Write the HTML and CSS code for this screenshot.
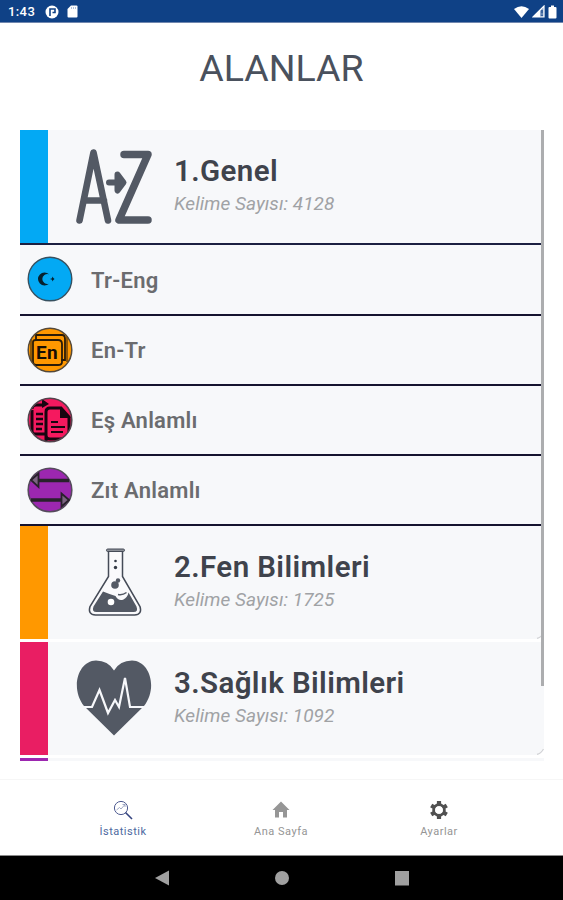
FILE: index.html
```html
<!DOCTYPE html>
<html lang="tr">
  <head>
    <meta charset="UTF-8" />
    <meta name="viewport" content="width=device-width, initial-scale=1.0" />
    <title>Alanlar</title>
    <link rel="stylesheet" href="styles.css">
  </head>
  <body>
    <div class="status-bar">
      <span class="time">1:43</span>
      <svg class="status-app" width="14" height="14" viewBox="0 0 14 14">
        <circle cx="7" cy="7" r="6.5" fill="#fff" />
        <path d="M5 11V4h5v3.5H7.500" fill="none" stroke="#0f4186" stroke-width="1.6" />
      </svg>
      <svg width="11" height="13" viewBox="0 0 11 13">
        <path d="M4 0.5h5.5a1 1 0 0 1 1 1v10a1 1 0 0 1-1 1h-8a1 1 0 0 1-1-1V4z" fill="#fff" />
        <path d="M4.5 2v2M6.5 2v2M8.5 2v2" stroke="#9db4d4" stroke-width="0.8" />
      </svg>
      <div class="status-right">
        <svg width="15" height="12" viewBox="0 0 15 12">
          <path d="M0 3Q7.500-2.500 15 3L7.500 12z" fill="#fff" />
        </svg>
        <svg width="13" height="13" viewBox="0 0 13 13">
          <path d="M1 12L12 1v11z" fill="#8ea6cb" stroke="#fff" stroke-width="1.200" />
          <path d="M1 12L8 5v7z" fill="#fff" />
          <path d="M10 5v3.500M10 9.500v1.500" stroke="#0f4186" stroke-width="1.300" />
        </svg>
        <svg width="9" height="14" viewBox="0 0 9 14">
          <path d="M3 0.500h3v1.500h1.500a1 1 0 0 1 1 1v9.500a1 1 0 0 1-1 1h-6a1 1 0 0 1-1-1V3a1 1 0 0 1 1-1H3z" fill="#fff" />
        </svg>
      </div>
    </div>

    <header>
      <h1>ALANLAR</h1>
    </header>

    <main>
      <div class="list">
        <section class="card open">
          <div class="stripe blue"></div>
          <div class="card-icon">
            <svg width="78" height="78" viewBox="0 0 78 78" fill="none" stroke="#535964" stroke-linecap="round" stroke-linejoin="round">
              <path d="M4.500 73.500L18.500 5.500L33 73.500M9 53.500H29" stroke-width="6.600" />
              <path d="M49 7.500H73L44 73H73" stroke-width="7.500" />
              <path d="M34 35.500H46M42.500 27.500L48.500 35.500L42.500 43.500z" fill="#535964" stroke-width="6" />
            </svg>
          </div>
          <div class="card-text">
            <h2>1.Genel</h2>
            <p>Kelime Sayısı: 4128</p>
          </div>
        </section>

        <div class="row first">
          <svg width="46" height="46" viewBox="0 0 46 46">
            <circle cx="23" cy="23" r="21.800" fill="#03a9f4" stroke="#37505f" stroke-width="1.400" />
            <path d="M22 18.300A6.500 6.500 0 1 0 22 27.700A5 5 0 1 1 22 18.300z" fill="#07212e" />
            <path d="M23 23l2-.8.5-1.700 1 1.800 1-.3-.8 1 .8 1-1-.3-1 1.800-.5-1.700z" fill="#07212e" />
          </svg>
          <span>Tr-Eng</span>
        </div>
        <div class="row">
          <svg width="46" height="46" viewBox="0 0 46 46">
            <clipPath id="clipEn"><circle cx="23" cy="23" r="22" /></clipPath>
            <circle cx="23" cy="23" r="22" fill="#ff9800" />
            <g clip-path="url(#clipEn)" fill="none" stroke="#291b08">
              <path d="M9 13V8H35M35 8Q38 8 38 12V33H34" stroke-width="1.800" />
              <path d="M6 40V15Q6 13 9 13H31Q35 13 35 17V35Q35 38 31 38H9Q6 38 6 35" stroke-width="1.800" />
              <path d="M4 10v27M40 10v25" stroke-width="1" />
            </g>
            <circle cx="23" cy="23" r="21.800" fill="none" stroke="#54493a" stroke-width="1.500" />
            <text class="en-label" x="9" y="32" textLength="22">En</text>
          </svg>
          <span>En-Tr</span>
        </div>
        <div class="row">
          <svg width="46" height="46" viewBox="0 0 46 46">
            <clipPath id="clipDoc"><circle cx="23" cy="23" r="22" /></clipPath>
            <circle cx="23" cy="23" r="22" fill="#f5195f" />
            <g clip-path="url(#clipDoc)" fill="none" stroke="#180510" stroke-width="3">
              <path d="M5 13V34Q5 37 8 37H18M5 12Q5 8 9 8H16" />
              <path d="M9 17h7M9 22h7M9 27h7M9 32h6" stroke-width="2.300" />
              <path d="M19 44V15Q19 11 23 11H34L42 20V40Q42 42 38 42H23Q19 42 19 38" />
              <path d="M33 10v11h11zM15 2l7 5-7 4z" fill="#180510" stroke="none" />
              <path d="M24 25h7M24 30h14M24 35h12" stroke-width="2.200" />
            </g>
            <circle cx="23" cy="23" r="21.800" fill="none" stroke="#52434c" stroke-width="1.600" />
          </svg>
          <span>Eş Anlamlı</span>
        </div>
        <div class="row">
          <svg width="46" height="46" viewBox="0 0 46 46">
            <circle cx="23" cy="23" r="21.800" fill="#9c27b0" stroke="#554b5c" stroke-width="1.600" />
            <g fill="#7c6482" stroke="#28212b">
              <path d="M11 13.500H42M4 33H35" stroke-width="3.400" />
              <path d="M4 13L11.500 6.500V20zM42 33L34.500 26.500V39.500z" stroke-width="1.800" />
            </g>
          </svg>
          <span>Zıt Anlamlı</span>
        </div>

        <section class="card">
          <div class="stripe orange"></div>
          <div class="card-icon">
            <svg width="78" height="78" viewBox="0 0 78 78">
              <g transform="translate(1.500 1.500)">
                <path d="M32 7V32L13.500 62Q11 70 19 70.500H58Q66 70 63.500 62L46 32V7" fill="#fafafc" stroke="#454b57" stroke-width="1.500" />
                <rect x="30" y="4.500" width="18" height="2.500" rx="1.200" fill="#8c9098" stroke="#454b57" />
                <path d="M26.500 47Q34 50 39 51.500Q42 57 47 55Q51 53 52 48L60 62Q62 67.500 57 67.500H20Q15 67.500 17 62z" fill="#535964" />
                <circle cx="39" cy="16.500" r="1.300" fill="#353b46" />
                <circle cx="39" cy="23" r="1.700" fill="#353b46" />
                <circle cx="41.500" cy="36" r="2.200" fill="#535964" />
                <circle cx="38.500" cy="40.500" r="3.800" fill="#535964" />
                <path d="M41.500 50Q46 51 50 48" fill="none" stroke="#535964" stroke-width="1.500" />
                <circle cx="34.500" cy="57.500" r="3.300" fill="#fff" />
              </g>
            </svg>
          </div>
          <div class="card-text">
            <h2>2.Fen Bilimleri</h2>
            <p>Kelime Sayısı: 1725</p>
          </div>
          <svg class="corner" width="8" height="8" viewBox="0 0 8 8"><path d="M1 7.300Q5 6.500 7.500 2" /></svg>
        </section>

        <section class="card">
          <div class="stripe pink"></div>
          <div class="card-icon">
            <svg width="78" height="78" viewBox="0 0 78 78">
              <path d="M39 76.500L9 47C-5 29 3 2 21 1.500Q33 1.500 39 11.500Q45 1.500 57 1.500C75 2 83 29 69 47z" fill="#535964" />
              <path d="M9 48H17L24.500 31L33 54L40 41L44 48L50 19L55 48H70" fill="none" stroke="#f7f8fb" stroke-width="2.200" />
            </svg>
          </div>
          <div class="card-text">
            <h2>3.Sağlık Bilimleri</h2>
            <p>Kelime Sayısı: 1092</p>
          </div>
          <svg class="corner" width="8" height="8" viewBox="0 0 8 8"><path d="M1 7.300Q5 6.500 7.500 2" /></svg>
        </section>

        <section class="card">
          <div class="stripe purple"></div>
        </section>
        <div class="scrollbar"></div>
      </div>
    </main>

    <nav class="bottom-nav">
      <a class="active" href="#">
        <svg width="20" height="20" viewBox="0 0 20 20" fill="none" stroke="#4d5a90">
          <circle cx="8" cy="8" r="6.600" stroke-width="1" />
          <path d="M3.500 10L6.500 7.500L8 9L12 4.500M9.500 4.500H12V7" stroke="#8993b7" stroke-width="0.800" />
          <path d="M12.500 12.500L19 19" stroke="#34437f" stroke-width="1.600" />
        </svg>
        <span>İstatistik</span>
      </a>
      <a href="#">
        <svg width="20" height="20" viewBox="0 0 20 20">
          <path d="M10 1.500L1.500 10H4V17.500H8V12H12V17.500H16V10H18.500z" fill="#969696" />
        </svg>
        <span>Ana Sayfa</span>
      </a>
      <a href="#">
        <svg width="20" height="20" viewBox="0 0 20 20">
          <circle cx="10" cy="10" r="5.300" fill="none" stroke="#505050" stroke-width="3" />
          <path d="M10 1V5M10 15V19M2.200 5.500L5.700 7.500M14.300 12.500L17.800 14.500M2.200 14.500L5.700 12.500M14.300 7.500L17.800 5.500" stroke="#505050" stroke-width="4.200" />
          <circle cx="10" cy="10" r="3.800" fill="#fff" />
        </svg>
        <span>Ayarlar</span>
      </a>
    </nav>

    <footer class="system-bar">
      <svg width="16" height="16" viewBox="0 0 16 16"><path d="M1 8L15 0.500V15.500z" fill="#a0a0a0" /></svg>
      <svg width="16" height="16" viewBox="0 0 16 16"><circle cx="8" cy="8" r="7" fill="#a0a0a0" /></svg>
      <svg width="16" height="16" viewBox="0 0 16 16"><rect x="1" y="1" width="14" height="14.500" fill="#a0a0a0" /></svg>
    </footer>
  </body>
</html>
```
FILE: styles.css
```css
* {
  margin: 0;
  padding: 0;
  box-sizing: border-box;
}

body {
  width: 563px;
  height: 900px;
  display: flex;
  flex-direction: column;
  overflow: hidden;
  font-family: Roboto, 'Liberation Sans', sans-serif;
  background-color: #fff;
}
.status-bar {
  height: 23px;
  flex: none;
  display: flex;
  align-items: center;
  padding: 1px 6px 0 8px;
  background-color: #0f4186;
  border-bottom: 1px solid #7187af;
  color: #fff;
}
.time {
  width: 37px;
  font-size: 13px;
  font-weight: 500;
  letter-spacing: 0.4px;
}
.status-app {
  margin-right: 8px;
}
.status-right {
  display: flex;
  align-items: center;
  gap: 3px;
  margin-left: auto;
}
header {
  height: 107px;
  flex: none;
  padding-top: 23px;
  text-align: center;
}
h1 {
  font-size: 37.5px;
  line-height: 45px;
  font-weight: 400;
  color: #4a515d;
}
main {
  height: 649px;
  flex: none;
  padding: 0 19px 0 20px;
}
.list {
  position: relative;
  height: 631px;
  overflow: hidden;
}
.card {
  height: 113px;
  display: flex;
  margin-bottom: 3px;
  background-color: #f7f8fa;
  border-bottom-right-radius: 8px;
}
.card.open {
  height: 115px;
  margin-bottom: 0;
  border-bottom: 2px solid #1c2041;
  border-radius: 0;
}
.stripe {
  width: 28px;
  flex: none;
}
.blue {
  background-color: #03a9f4;
}
.orange {
  background-color: #ff9800;
}
.pink {
  background-color: #e91e63;
}
.purple {
  background-color: #9c27b0;
}
.card-icon {
  width: 126px;
  padding: 17px 0 0 27px;
}
.card-text {
  padding-top: 23px;
}
.corner {
  align-self: flex-end;
  margin-left: auto;
  fill: none;
  stroke: #d0d1d4;
  stroke-width: 1.2;
}
h2 {
  font-size: 29.5px;
  line-height: 36px;
  font-weight: 600;
  letter-spacing: 0.4px;
  white-space: nowrap;
  color: #3f434c;
}
.card p {
  padding-top: 1px;
  font-size: 19px;
  line-height: 28px;
  font-style: italic;
  letter-spacing: 0.05px;
  color: #a0a2a5;
}
.row {
  height: 70px;
  display: flex;
  align-items: center;
  gap: 18px;
  padding-left: 7px;
  background-color: #f7f8fa;
  border-bottom: 2px solid #15132f;
  font-size: 22px;
  font-weight: 600;
  letter-spacing: 0.25px;
  color: #6b6c6f;
}
.row.first {
  height: 71px;
}
.row svg {
  margin-bottom: 1px;
}
.row span {
  padding-top: 1px;
}
.en-label {
  font-size: 19px;
  font-weight: 700;
  fill: #160e04;
}
.scrollbar {
  position: absolute;
  top: 0;
  right: 0;
  width: 3px;
  height: 556px;
  background-color: #acadaf;
}
.bottom-nav {
  height: 77px;
  flex: none;
  display: flex;
  justify-content: center;
  padding: 20px 1px 0 0;
  border-top: 1px solid #f6f6f6;
  border-bottom: 1px solid #8a8a8a;
}
.bottom-nav a {
  width: 158px;
  display: flex;
  flex-direction: column;
  align-items: center;
  gap: 5px;
  font-size: 11px;
  line-height: 13px;
  letter-spacing: 0.5px;
  color: #959595;
  text-decoration: none;
}
.bottom-nav .active {
  color: #4d69a0;
}
.system-bar {
  height: 44px;
  display: flex;
  justify-content: center;
  align-items: center;
  gap: 104px;
  background-color: #000;
}
```
